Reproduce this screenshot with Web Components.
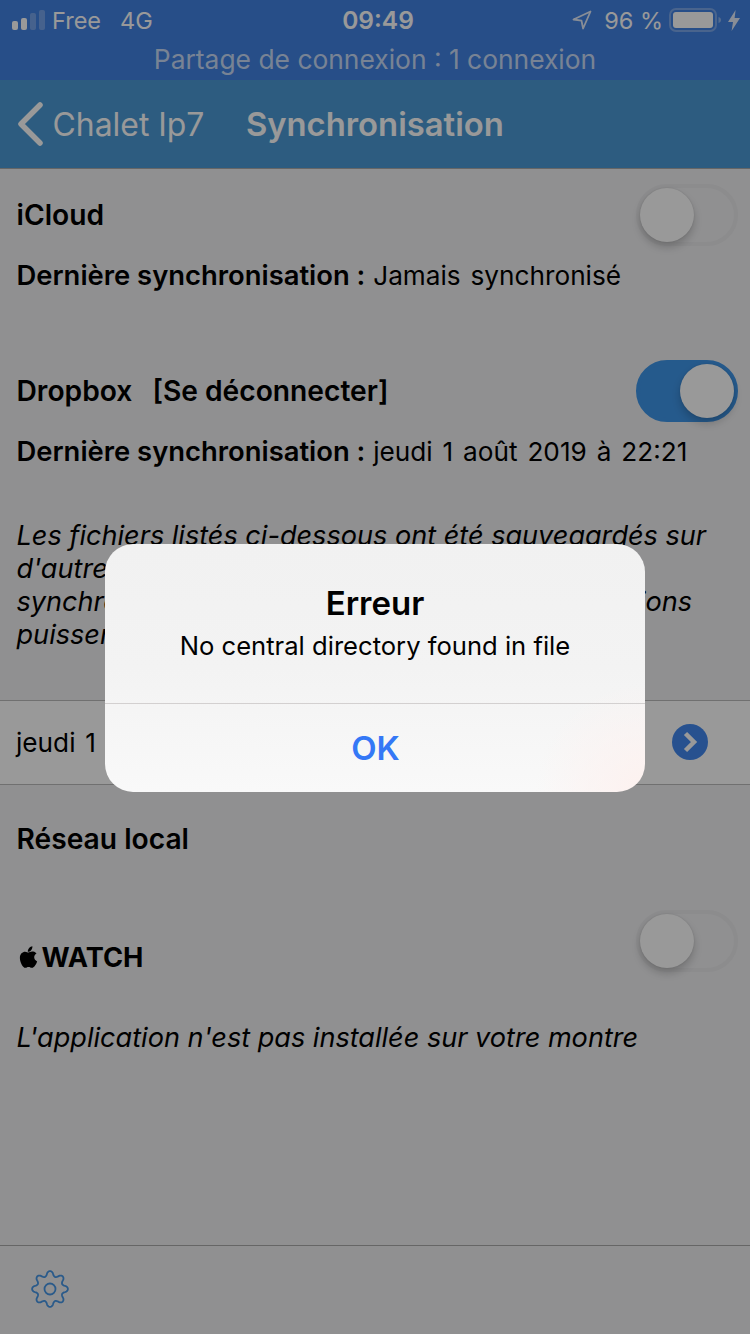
<!DOCTYPE html>
<html lang="fr">
<head>
<meta charset="utf-8">
<title>Synchronisation</title>
<style>
  html, body { margin: 0; padding: 0; background: #f0f0f2; }
  body { font-family: Inter, "Noto Sans", sans-serif; color: #000; }
</style>
</head>
<body>
<sync-app>
  <status-bar slot="top"></status-bar>
  <nav-bar slot="top" back="Chalet Ip7" heading="Synchronisation"></nav-bar>

  <service-row label="iCloud"><toggle-switch></toggle-switch></service-row>
  <last-sync when="Jamais synchronisé"></last-sync>

  <service-row label="Dropbox" action="[Se déconnecter]" style="margin-top:56px"><toggle-switch checked></toggle-switch></service-row>
  <last-sync when="jeudi 1 août 2019 à 22:21"></last-sync>

  <note-text style="margin-top:37.5px">Les fichiers listés ci-dessous ont été sauvegardés sur<br>d'autres appareils. Sélectionnez-en un pour<br>synchronisation, et pour que toutes vos informations<br>puissent être récupérées.</note-text>

  <file-row style="margin-top:49.5px">jeudi 1 août 2019 à 22:21</file-row>

  <service-row label="Réseau local" style="margin-top:24px"></service-row>

  <service-row watch style="margin-top:41px"><toggle-switch></toggle-switch></service-row>

  <note-text style="margin-top:33.5px">L'application n'est pas installée sur votre montre</note-text>

  <tool-bar slot="bottom"></tool-bar>

  <alert-dialog slot="overlay" heading="Erreur" message="No central directory found in file" button="OK"></alert-dialog>
</sync-app>

<script>
class SyncApp extends HTMLElement {
  constructor() {
    super();
    this.attachShadow({ mode: 'open' });
  }
  connectedCallback() {
    this.shadowRoot.innerHTML = `
      <style>
        :host { display: block; position: relative; width: 750px; height: 1334px; overflow: hidden; background: #f0f0f2; }
        .column { display: flex; flex-direction: column; height: 100%; }
        .content { flex: 1; padding-top: 16px; }
        .scrim {
          position: absolute; inset: 0;
          background: rgba(0, 0, 0, 0.4);
          display: flex; align-items: center; justify-content: center;
        }
      </style>
      <div class="column">
        <slot name="top"></slot>
        <div class="content"><slot></slot></div>
        <slot name="bottom"></slot>
      </div>
      <div class="scrim"><slot name="overlay"></slot></div>
    `;
  }
}

class StatusBar extends HTMLElement {
  constructor() {
    super();
    this.attachShadow({ mode: 'open' });
  }
  connectedCallback() {
    this.shadowRoot.innerHTML = `
      <style>
        :host { display: block; background: #4282e3; color: #fff; height: 80px; }
        .line { display: flex; align-items: center; height: 40px; position: relative; font-size: 23.5px; padding: 0 10px 0 12px; box-sizing: border-box; }
        .signal { display: flex; align-items: flex-end; gap: 3px; height: 20px; }
        .signal i { width: 6px; border-radius: 2px; background: #fff; display: block; }
        .signal i.off { background: rgba(255,255,255,.28); }
        .carrier { margin-left: 7px; }
        .net { margin-left: 19px; }
        .time { position: absolute; left: 0; right: 0; text-align: center; font-weight: 600; font-size: 24.5px; padding-left: 6px; }
        .right { margin-left: auto; display: flex; align-items: center; }
        .pct { margin: 0 6px 0 12px; }
        .tether { text-align: center; font-size: 26.4px; line-height: 38px; height: 40px; color: rgba(255,255,255,.72); }
        svg { display: block; }
      </style>
      <div class="line">
        <div class="signal">
          <i style="height:9px"></i><i style="height:12px"></i><i class="off" style="height:17px"></i><i class="off" style="height:20px"></i>
        </div>
        <span class="carrier">Free</span><span class="net">4G</span>
        <span class="time">09:49</span>
        <div class="right">
          <svg width="20" height="20" viewBox="0 0 20 20" fill="none" stroke="#fff" stroke-opacity=".85" stroke-width="1.8" stroke-linejoin="round"><path d="M18.5 1.5 1.5 9.5l8 1.200 1.600 7.800z"/></svg>
          <span class="pct">96 %</span>
          <svg width="53" height="24" viewBox="0 0 53 24">
            <rect x="1" y="1" width="46" height="22" rx="6" fill="none" stroke="#fff" stroke-opacity=".3" stroke-width="2"/>
            <rect x="4" y="4" width="40" height="16" rx="3" fill="#fff"/>
            <path d="M49.500 9c1.600.4 2.500 1.500 2.500 3s-.9 2.600-2.500 3z" fill="#fff" fill-opacity=".4"/>
          </svg>
          <svg style="margin-left:6px" width="12" height="21" viewBox="0 0 12 21"><path d="M7.600 0 0 12h5L3.600 21 12 8H6.600z" fill="#fff" fill-opacity=".85"/></svg>
        </div>
      </div>
      <div class="tether">Partage de connexion : 1 connexion</div>
    `;
  }
}

class NavBar extends HTMLElement {
  constructor() {
    super();
    this.attachShadow({ mode: 'open' });
  }
  connectedCallback() {
    const back = this.getAttribute('back') || '';
    const heading = this.getAttribute('heading') || '';
    this.shadowRoot.innerHTML = `
      <style>
        :host { display: flex; align-items: center; height: 89px; box-sizing: border-box; background: #4b99d5; border-bottom: 1px solid #aaa; color: #fff; padding-left: 17px; }
        svg { display: block; flex: none; }
        .back { font-size: 31.9px; margin-left: 9.5px; }
        .title { font-size: 32.8px; font-weight: 600; margin-left: 41.5px; }
      </style>
      <svg width="26" height="44" viewBox="0 0 26 44" fill="none" stroke="#fff" stroke-width="5.5" stroke-linecap="round" stroke-linejoin="round"><path d="M23 3 4 22l19 19"/></svg>
      <span class="back">${back}</span>
      <span class="title">${heading}</span>
    `;
  }
}

class ServiceRow extends HTMLElement {
  constructor() {
    super();
    this.attachShadow({ mode: 'open' });
  }
  connectedCallback() {
    const label = this.getAttribute('label') || '';
    const action = this.getAttribute('action');
    const watchMark = `
      <div class="mark">
        <svg width="19" height="22" viewBox="0 0 22 25" fill="#000"><path d="M15.500 0c.2 2-.6 3.500-1.500 4.600-1 1.200-2.400 2-3.800 1.900-.2-1.800.7-3.500 1.600-4.500C12.800.9 14.300.1 15.500 0zM20.300 8.400c-1.900 1.200-2.700 2.700-2.700 4.500 0 2.200 1.300 3.800 3.400 4.700-.6 1.800-1.400 3.300-2.400 4.700-1 1.400-2.100 2.700-3.700 2.700-1.500 0-2.100-.9-3.800-.9-1.800 0-2.400.9-3.800.9-1.500 0-2.700-1.400-3.800-3C2.500 19.800 1 16.600 1 13.600c0-4.800 3.100-7.300 6.100-7.300 1.600 0 2.900 1 3.900 1 .9 0 2.400-1.100 4.200-1.100 1.400 0 3.600.4 5.100 2.200z"/></svg>
        <span class="watch">WATCH</span>
      </div>`;
    this.shadowRoot.innerHTML = `
      <style>
        :host { display: flex; align-items: center; height: 60px; padding: 0 12px 0 16.5px; font-size: 28.2px; font-weight: 600; }
        /* the watch switch sits higher than its label in the app */
        :host([watch]) { height: 77px; align-items: flex-end; }
        :host([watch]) .tail { align-self: flex-start; }
        .label { margin-top: -1px; }
        .mark { display: flex; align-items: center; gap: 4px; height: 60px; margin-left: 2px; font-size: 27.2px; }
        .action { margin-left: 20px; margin-top: -1px; }
        .watch { font-weight: 700; }
        .tail { margin-left: auto; }
        svg { display: block; }
      </style>
      ${this.hasAttribute('watch') ? watchMark : `<span class="label">${label}</span>`}
      ${action ? `<span class="action">${action}</span>` : ''}
      <div class="tail"><slot></slot></div>
    `;
  }
}

class LastSync extends HTMLElement {
  constructor() {
    super();
    this.attachShadow({ mode: 'open' });
  }
  connectedCallback() {
    const when = this.getAttribute('when') || '';
    this.shadowRoot.innerHTML = `
      <style>
        :host { display: flex; align-items: center; height: 60px; padding-left: 16.5px; font-size: 26.2px; word-spacing: 2.5px; white-space: pre; }
        b { font-weight: 600; font-size: 27.4px; word-spacing: 0; }
        span { margin-left: 1px; }
      </style>
      <b>Dernière synchronisation : </b><span>${when}</span>
    `;
  }
}

class NoteText extends HTMLElement {
  constructor() {
    super();
    this.attachShadow({ mode: 'open' });
  }
  connectedCallback() {
    this.shadowRoot.innerHTML = `
      <style>
        :host { display: block; padding-left: 16.5px; font-size: 27.1px; line-height: 33px; font-style: italic; white-space: nowrap; }
      </style>
      <slot></slot>
    `;
  }
}

class FileRow extends HTMLElement {
  constructor() {
    super();
    this.attachShadow({ mode: 'open' });
  }
  connectedCallback() {
    this.shadowRoot.innerHTML = `
      <style>
        :host { display: flex; align-items: center; justify-content: space-between; height: 85px; box-sizing: border-box; background: #fff; border-top: 1px solid #bbb; border-bottom: 1px solid #bbb; padding: 0 42px 0 16px; font-size: 26.2px; word-spacing: 2.4px; }
        svg { display: block; }
      </style>
      <span><slot></slot></span>
      <svg width="36" height="36" viewBox="0 0 36 36" style="margin-top:-2px"><circle cx="18" cy="18" r="18" fill="#4188ee"/><path d="M13.500 9.500 22 18l-8.500 8.500" fill="none" stroke="#fff" stroke-width="4.500"/></svg>
    `;
  }
}

class ToggleSwitch extends HTMLElement {
  constructor() {
    super();
    this.attachShadow({ mode: 'open' });
  }
  connectedCallback() {
    this.shadowRoot.innerHTML = `
      <style>
        :host { display: block; width: 102px; height: 62px; box-sizing: border-box; border-radius: 31px; border: 4px solid #e9e9eb; background: #f0f0f2; position: relative; }
        :host([checked]) { background: #3f96e9; border-color: #3f96e9; }
        .knob { position: absolute; left: 0; top: 0; width: 54px; height: 54px; border-radius: 50%; background: #fff; box-shadow: 0 5px 8px rgba(0,0,0,.2), 0 0 2px rgba(0,0,0,.12); }
        :host([checked]) .knob { left: 40px; }
      </style>
      <div class="knob"></div>
    `;
  }
}

class ToolBar extends HTMLElement {
  constructor() {
    super();
    this.attachShadow({ mode: 'open' });
  }
  gearPath(cx, cy) {
    // eight soft teeth walked round the circle
    const pts = [];
    for (let i = 0; i < 160; i++) {
      const a = i / 160 * Math.PI * 2 - Math.PI / 2;
      const wave = Math.cos(a * 8 + Math.PI * 4);
      const r = 15.5 + 2.4 * Math.sign(wave) * Math.pow(Math.abs(wave), 0.7);
      pts.push((cx + r * Math.cos(a)).toFixed(2) + ' ' + (cy + r * Math.sin(a)).toFixed(2));
    }
    return 'M' + pts.join('L') + 'Z';
  }
  connectedCallback() {
    this.shadowRoot.innerHTML = `
      <style>
        :host { display: flex; align-items: center; height: 89px; box-sizing: border-box; border-top: 1px solid #aaa; padding: 0 0 3px 30px; }
        svg { display: block; }
      </style>
      <svg width="40" height="40" viewBox="0 0 40 40" fill="none" stroke="#4797e6" stroke-width="1.8" stroke-linejoin="round">
        <path d="${this.gearPath(20, 20)}"/>
        <circle cx="20" cy="20" r="5.5"/>
      </svg>
    `;
  }
}

class AlertDialog extends HTMLElement {
  constructor() {
    super();
    this.attachShadow({ mode: 'open' });
  }
  connectedCallback() {
    const heading = this.getAttribute('heading') || '';
    const message = this.getAttribute('message') || '';
    const button = this.getAttribute('button') || 'OK';
    this.shadowRoot.innerHTML = `
      <style>
        :host {
          display: block; width: 540px; height: 248px; margin-top: 2px; border-radius: 28px; overflow: hidden; color: #000;
          background:
            radial-gradient(circle at 100% 100%, #fdf1ef 0, rgba(253,241,239,0) 110px),
            linear-gradient(#f1f1f1 0, #f3f3f3 50%, #f9f9f9 100%);
        }
        .body { height: 160px; box-sizing: border-box; padding-top: 38px; text-align: center; border-bottom: 1px solid #d3d0d0; }
        h2 { margin: 0; font-size: 33px; line-height: 42px; font-weight: 600; }
        p { margin: 2px 0 0; font-size: 25.6px; line-height: 40px; }
        button {
          display: block; width: 100%; height: 88px; border: 0; padding: 0 0 0 1px; background: none;
          font: 600 33px Inter, "Noto Sans", sans-serif; color: #3478f6;
        }
      </style>
      <div class="body">
        <h2>${heading}</h2>
        <p>${message}</p>
      </div>
      <button>${button}</button>
    `;
  }
}

customElements.define('sync-app', SyncApp);
customElements.define('status-bar', StatusBar);
customElements.define('nav-bar', NavBar);
customElements.define('service-row', ServiceRow);
customElements.define('last-sync', LastSync);
customElements.define('note-text', NoteText);
customElements.define('file-row', FileRow);
customElements.define('toggle-switch', ToggleSwitch);
customElements.define('tool-bar', ToolBar);
customElements.define('alert-dialog', AlertDialog);
</script>
</body>
</html>
